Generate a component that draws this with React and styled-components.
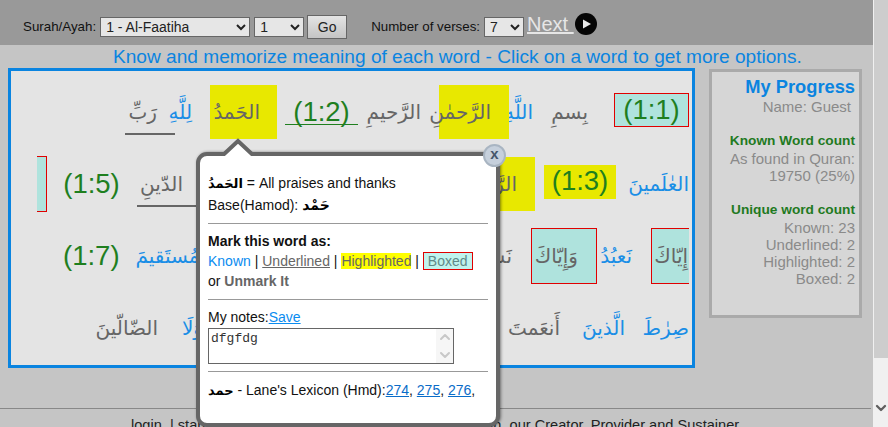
import React from 'react'
import styled, { createGlobalStyle } from 'styled-components'
import { ChevronUp, ChevronDown } from 'lucide-react'

const GlobalStyle = createGlobalStyle`
  html, body {
    margin: 0;
    padding: 0;
    height: 427px;
    overflow: hidden;
    background: #f0f0f0;
    font-family: "Liberation Sans", Arial, sans-serif;
  }
`

const Shell = styled.div`
  display: flex;
  width: 888px;
  height: 427px;
  overflow: hidden;
`

const Page = styled.div`
  position: relative;
  width: 873px;
  height: 427px;
  flex-shrink: 0;
  background: #c5c5c5;
  overflow: hidden;
`

const Scrollbar = styled.div`
  width: 14px;
  margin-left: 1px;
  display: flex;
  flex-direction: column;
  align-items: center;
  background: #f0f0f0;
`

const ScrollThumb = styled.div`
  width: 14px;
  height: 358px;
  flex-shrink: 0;
  background: #cdcdcd;
`

const ScrollArrow = styled(ChevronDown)`
  margin-top: 42px;
  color: #5f5f5f;
`

const Toolbar = styled.div`
  box-sizing: border-box;
  height: 45px;
  background: #999;
  display: flex;
  align-items: center;
  padding: 8px 0 0 23px;
  font-size: 13.33px;
  color: #111;
`

const Dropdown = styled.select`
  height: 20px;
  width: ${p => p.$w}px;
  margin-left: ${p => p.$ml}px;
  padding: 0 0 0 1px;
  font-family: "Liberation Sans", Arial, sans-serif;
  font-size: 14px;
  color: #222;
  background-color: #e6e6e6;
  border: 1px solid #666;
  border-radius: 0;
`

const GoButton = styled.button`
  width: 40px;
  height: 24px;
  margin-left: 3px;
  padding: 0;
  font-family: "Liberation Sans", Arial, sans-serif;
  font-size: 14px;
  color: #222;
  background: linear-gradient(#e4e4e4, #c4c4c4);
  border: 1px solid #666;
`

const VersesLabel = styled.span`
  margin-left: 24px;
`

const NextLink = styled.a`
  margin-left: 3px;
  margin-top: -5px;
  width: 44px;
  font-size: 20px;
  color: #e6e6e6;
  text-decoration: underline;
  white-space: pre;
`

const PlayIcon = styled.svg`
  margin-left: 4px;
  margin-top: -5px;
`

const Heading = styled.div`
  height: 23px;
  line-height: 23px;
  padding-left: 113px;
  font-size: 19.1px;
  color: #0a84e0;
  white-space: nowrap;
`

const Columns = styled.div`
  display: flex;
  align-items: flex-start;
  padding-left: 8px;
`

const Panel = styled.div`
  box-sizing: border-box;
  width: 687px;
  height: 300px;
  background: #e4e4e4;
  border: 3px solid #0a84e0;
  padding: 5px 3px 0 26px;
`

const WordClip = styled.div`
  overflow: hidden;
  height: 289px;
`

const Row = styled.div`
  direction: rtl;
  display: flex;
  align-items: center;
  height: 72px;
`

const Word = styled.span`
  position: relative;
  box-sizing: border-box;
  flex-shrink: 0;
  display: block;
  width: ${p => p.$w}px;
  height: ${p => (p.$mark === 'boxed' && p.$h) || 54}px;
  margin-left: ${p => p.$gap || 0}px;
  margin-right: ${p => p.$mr || 0}px;
  padding-right: ${p => (p.$pad === undefined ? 18 : p.$pad)}px;
  font-family: "DejaVu Sans", sans-serif;
  font-size: 20px;
  line-height: 54px;
  text-align: right;
  white-space: nowrap;
  color: ${p => (p.$blue ? '#1a8ee6' : '#666')};
  background: ${p =>
    p.$mark === 'yellow' ? '#e8e800' : p.$mark === 'boxed' ? '#afe3dd' : 'transparent'};
  border: ${p => (p.$mark === 'boxed' ? '1px solid #e00000' : '0')};

  ${p =>
    p.$under &&
    `&::after {
      content: '';
      position: absolute;
      left: 0;
      right: 0;
      bottom: 4px;
      height: 2px;
      background: #666;
    }`}
`

const Verse = styled.span`
  position: relative;
  box-sizing: border-box;
  flex-shrink: 0;
  display: block;
  direction: ltr;
  width: ${p => p.$w}px;
  height: ${p => (p.$mark ? 34 : 36)}px;
  margin-left: ${p => p.$gap || 0}px;
  margin-bottom: ${p => (p.$mark ? 4 : 0)}px;
  font-size: 27.5px;
  line-height: ${p => (p.$mark ? 32 : 36)}px;
  text-align: center;
  color: #1f7f1f;
  background: ${p =>
    p.$mark === 'yellow' ? '#e8e800' : p.$mark === 'boxed' ? '#afe3dd' : 'transparent'};
  border: ${p => (p.$mark === 'boxed' ? '1px solid #e00000' : '0')};

  ${p =>
    p.$under &&
    `&::after {
      content: '';
      position: absolute;
      left: 0;
      right: 0;
      bottom: 5px;
      height: 1px;
      background: #1f7f1f;
    }`}
`

const Progress = styled.div`
  box-sizing: border-box;
  width: 153px;
  height: 249px;
  margin: 1px 0 0 14px;
  padding: 4px 4px 0 0;
  background: #d6d6d6;
  border: 3px solid #aaa;
  text-align: right;
  font-size: 15px;
  line-height: 17px;
  color: #8a8a8a;
`

const ProgressTitle = styled.div`
  font-size: 18.3px;
  font-weight: bold;
  line-height: 22px;
  color: #0a84e0;
`

const ProgressName = styled.div`
  padding-right: 4px;
  margin-bottom: 17px;
`

const CountTitle = styled.div`
  font-size: 13.7px;
  font-weight: bold;
  line-height: 18px;
  color: #1f7a1f;
`

const CountGroup = styled.div`
  margin-bottom: 17px;
`

const Footer = styled.div`
  margin: 40px 2px 0 0;
  border-top: 1px solid #888;
  padding: 8px 0 0 131px;
  font-size: 14.6px;
  color: #222;
  white-space: pre;
`

const Popup = styled.div`
  position: absolute;
  left: 196px;
  top: 152px;
  box-sizing: border-box;
  width: 304px;
  height: 275px;
  padding: 17px 8px 0;
  background: #fff;
  border: 4px solid #666;
  border-radius: 11px;
  box-shadow: 1px 0 3px rgba(0, 0, 0, 0.45);
  font-size: 14px;
  line-height: 20px;
  color: #111;
`

const Caret = styled.svg`
  position: absolute;
  left: 20px;
  top: -18px;
`

const CloseButton = styled.div`
  position: absolute;
  right: -10px;
  top: -12px;
  box-sizing: border-box;
  width: 23px;
  height: 23px;
  border-radius: 50%;
  border: 2px solid #a9b5c2;
  background: #c6d0dc;
  color: #45566b;
  font-size: 15px;
  font-weight: bold;
  line-height: 16px;
  text-align: center;
`

const ArabicBold = styled.span`
  font-family: "DejaVu Sans", sans-serif;
  font-size: ${p => p.$size || 14}px;
  font-weight: bold;
  color: #000;
`

const PopupLine = styled.div`
  height: ${p => p.$h || 20}px;
  white-space: nowrap;
`

const Rule = styled.div`
  height: 1px;
  background: #999;
  margin: ${p => p.$top}px 0 ${p => p.$bottom}px;
`

const MarkTitle = styled.div`
  font-weight: bold;
  color: #111;
`

const KnownLink = styled.span`
  color: #0a8cf0;
`

const UnderLink = styled.span`
  color: #666;
  text-decoration: underline;
`

const HighlightLink = styled.span`
  color: #666;
  background: #ffff00;
`

const BoxedLink = styled.span`
  display: inline-block;
  box-sizing: border-box;
  height: 18px;
  line-height: 16px;
  padding: 0 4px;
  color: #5f8a88;
  background: #c0f3ee;
  border: 1px solid #e00000;
  vertical-align: top;
  margin-top: 1px;
`

const Unmark = styled.span`
  font-weight: bold;
  color: #666;
`

const SaveLink = styled.a`
  color: #0a8cf0;
  text-decoration: underline;
`

const NoteBox = styled.div`
  box-sizing: border-box;
  display: flex;
  width: 246px;
  height: 36px;
  margin-top: 1px;
  border: 1px solid #666;
`

const NoteText = styled.textarea`
  flex: 1;
  min-width: 0;
  margin: 0;
  padding: 2px 2px 0;
  border: 0;
  outline: 0;
  resize: none;
  overflow: hidden;
  font-family: "Liberation Mono", monospace;
  font-size: 13px;
  line-height: 15px;
  color: #333;
`

const NoteScroll = styled.div`
  width: 17px;
  display: flex;
  flex-direction: column;
  align-items: center;
  justify-content: space-between;
  background: #f6f6f6;
  color: #c8c8c8;
`

const LexLink = styled.a`
  color: #0a6cc8;
  text-decoration: underline;
`

const row1 = [
  { v: '(1:1)', w: 75, gap: 8, mark: 'boxed' },
  { t: 'بِسمِ', w: 56 },
  { t: 'اللَّهِ', w: 40, pad: 17, blue: true, gap: 1 },
  { t: 'الرَّحمٰنِ', w: 70, mark: 'yellow' },
  { t: 'الرَّحيمِ', w: 72, gap: 9 },
  { v: '(1:2)', w: 73, gap: 8, under: true },
  { t: 'الحَمدُ', w: 67, pad: 17, mark: 'yellow' },
  { t: 'لِلَّهِ', w: 35, blue: true },
  { t: 'رَبِّ', w: 50, under: true },
]

const row2 = [
  { t: 'العٰلَمينَ', w: 64, pad: 0, blue: true, gap: 9 },
  { v: '(1:3)', w: 72, gap: 9, mark: 'yellow' },
  { t: 'الرَّحمٰنِ', w: 70, mark: 'yellow' },
  { t: 'الرَّحيمِ', w: 72 },
  { t: 'مٰلِكِ', w: 70 },
  { t: 'يَومِ', w: 60, gap: 63 },
  { t: 'الدّينِ', w: 63, pad: 17, under: true, gap: 17 },
  { v: '(1:5)', w: 57, gap: 16 },
  { t: 'إِيّاكَ', w: 60, mark: 'boxed', h: 56 },
]

const row3 = [
  { t: 'إِيّاكَ', w: 44, pad: 6, mr: -6, mark: 'boxed', h: 56 },
  { t: 'نَعبُدُ', w: 53, pad: 19, blue: true, gap: 1 },
  { t: 'وَإِيّاكَ', w: 66, pad: 18, mark: 'boxed', h: 56 },
  { t: 'نَستَعينُ', w: 91, pad: 19 },
  { t: 'اهدِنَا', w: 80 },
  { t: 'الصِّرٰطَ', w: 100, gap: 48 },
  { t: 'المُستَقيمَ', w: 75, pad: 0, blue: true, gap: 19 },
  { v: '(1:7)', w: 55 },
]

const row4 = [
  { t: 'صِرٰطَ', w: 47, pad: 0, blue: true },
  { t: 'الَّذينَ', w: 65, pad: 17, blue: true },
  { t: 'أَنعَمتَ', w: 74, pad: 17 },
  { t: 'عَلَيهِم', w: 70 },
  { t: 'غَيرِ', w: 50 },
  { t: 'المَغضوبِ', w: 100 },
  { t: 'عَلَيهِم', w: 70 },
  { t: 'وَلَا', w: 36, pad: 10, blue: true },
  { t: 'الضّالّينَ', w: 85, pad: 19 },
]

const WordRow = ({ items }) => (
  <Row>
    {items.map((item, index) =>
      item.v ? (
        <Verse key={index} $w={item.w} $gap={item.gap} $mark={item.mark} $under={item.under}>
          {item.v}
        </Verse>
      ) : (
        <Word
          key={index}
          $w={item.w}
          $gap={item.gap}
          $pad={item.pad}
          $mr={item.mr}
          $h={item.h}
          $blue={item.blue}
          $mark={item.mark}
          $under={item.under}
        >
          {item.t}
        </Word>
      )
    )}
  </Row>
)

export default function App() {
  return (
    <Shell>
      <GlobalStyle />
      <Page>
        <Toolbar>
          <span>Surah/Ayah:</span>
          <Dropdown $w={150} $ml={4} defaultValue="1">
            <option value="1">1 - Al-Faatiha</option>
          </Dropdown>
          <Dropdown $w={50} $ml={4} defaultValue="1">
            <option value="1">1</option>
          </Dropdown>
          <GoButton>Go</GoButton>
          <VersesLabel>Number of verses:</VersesLabel>
          <Dropdown $w={40} $ml={4} defaultValue="7">
            <option value="7">7</option>
          </Dropdown>
          <NextLink>Next </NextLink>
          <PlayIcon width="22" height="22" viewBox="0 0 22 22">
            <circle cx="11" cy="11" r="11" fill="#050505" />
            <path d="M8 6.5 L16 11 L8 15.5 Z" fill="#e8e8e8" />
          </PlayIcon>
        </Toolbar>
        <Heading>Know and memorize meaning of each word - Click on a word to get more options.</Heading>
        <Columns>
          <Panel>
            <WordClip>
              <WordRow items={row1} />
              <WordRow items={row2} />
              <WordRow items={row3} />
              <WordRow items={row4} />
            </WordClip>
          </Panel>
          <Progress>
            <ProgressTitle>My Progress</ProgressTitle>
            <ProgressName>Name: Guest</ProgressName>
            <CountGroup>
              <CountTitle>Known Word count</CountTitle>
              <div>As found in Quran:</div>
              <div>19750 (25%)</div>
            </CountGroup>
            <CountGroup>
              <CountTitle>Unique word count</CountTitle>
              <div>Known: 23</div>
              <div>Underlined: 2</div>
              <div>Highlighted: 2</div>
              <div>Boxed: 2</div>
            </CountGroup>
          </Progress>
        </Columns>
        <Footer>login  | start your journey to know, love, and worship Allah, our Creator, Provider and Sustainer</Footer>
        <Popup>
          <Caret width="36" height="18" viewBox="0 0 36 18">
            <path d="M2 18 L18 3 L34 18" fill="#fff" stroke="#666" strokeWidth="4" />
          </Caret>
          <CloseButton>x</CloseButton>
          <PopupLine $h={22}>
            <ArabicBold $size={13}>الحَمدُ</ArabicBold> = All praises and thanks
          </PopupLine>
          <PopupLine $h={23}>
            Base(Hamod): <ArabicBold>حَمْد</ArabicBold>
          </PopupLine>
          <Rule $top={5} $bottom={7} />
          <MarkTitle>Mark this word as:</MarkTitle>
          <PopupLine>
            <KnownLink>Known</KnownLink> | <UnderLink>Underlined</UnderLink> |{' '}
            <HighlightLink>Highlighted</HighlightLink> | <BoxedLink>Boxed</BoxedLink>
          </PopupLine>
          <PopupLine>
            or <Unmark>Unmark It</Unmark>
          </PopupLine>
          <Rule $top={8} $bottom={7} />
          <PopupLine>
            My notes:<SaveLink>Save</SaveLink>
          </PopupLine>
          <NoteBox>
            <NoteText defaultValue="dfgfdg" />
            <NoteScroll>
              <ChevronUp size={16} strokeWidth={3} />
              <ChevronDown size={16} strokeWidth={3} />
            </NoteScroll>
          </NoteBox>
          <Rule $top={7} $bottom={8} />
          <PopupLine>
            <ArabicBold $size={13}>حمد</ArabicBold> - Lane's Lexicon (Hmd):<LexLink>274</LexLink>,{' '}
            <LexLink>275</LexLink>, <LexLink>276</LexLink>,
          </PopupLine>
        </Popup>
      </Page>
      <Scrollbar>
        <ScrollThumb />
        <ScrollArrow size={16} strokeWidth={3.5} />
      </Scrollbar>
    </Shell>
  )
}
